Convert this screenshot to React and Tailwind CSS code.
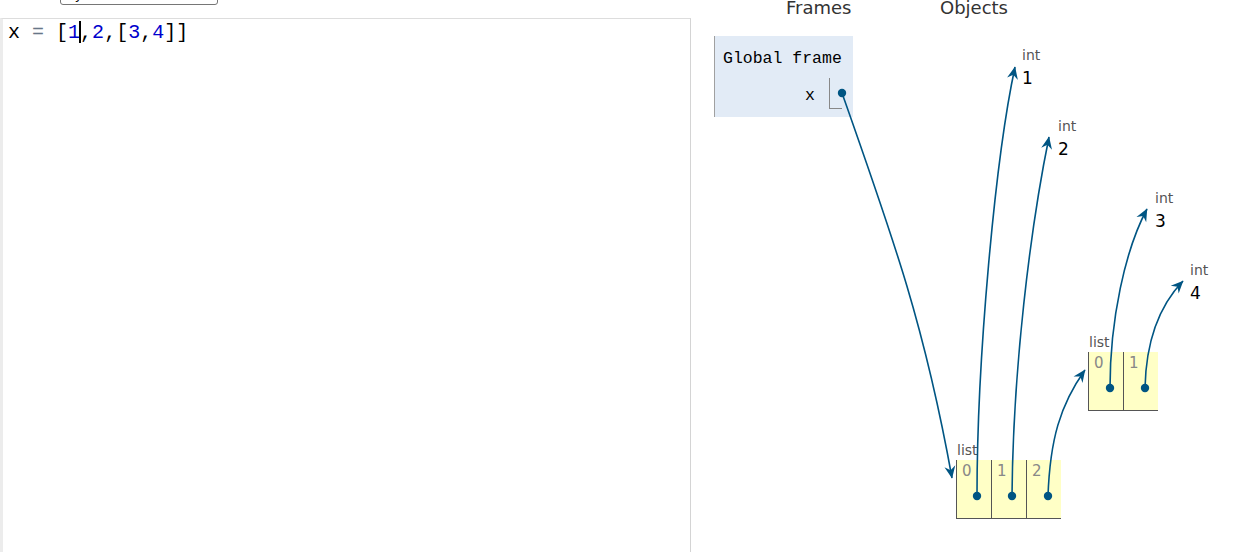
import React from 'react';

const ARROW = '#005583';

// pointer arrows, in page coordinates
const arrows = [
  'M842,93 C895,243 925,328 952,478',
  'M977,496 C977,360 995,160 1015,67',
  'M1012,496 C1013,370 1030,230 1049,137',
  'M1048,496 C1050,440 1060,405 1085,370',
  'M1110,388 C1110,320 1125,250 1147,209',
  'M1145,388 C1146,340 1160,305 1183,281',
];

const dots = [
  [842, 93],
  [977, 496],
  [1012, 496],
  [1048, 496],
  [1110, 388],
  [1145, 388],
];

function IntObj({ pos, value }) {
  return (
    <div className={`absolute ${pos}`}>
      <div className="text-[14px] leading-[16px] text-[#555]">int</div>
      <div className="mt-[5px] text-[17px] leading-[20px] text-black">{value}</div>
    </div>
  );
}

function ListObj({ pos, count }) {
  return (
    <div className={`absolute ${pos}`}>
      <div className="pl-[1px] text-[14px] leading-[16px] text-[#555]">list</div>
      <div className="mt-[2px] flex">
        {Array.from({ length: count }).map((_, i) => (
          <div
            key={i}
            className="h-[59px] w-[35px] border-b border-l border-[#555] bg-[#ffffc6] pl-[5px] pt-[2px] text-[15px] leading-[18px] text-[#888]"
          >
            {i}
          </div>
        ))}
      </div>
    </div>
  );
}

export default function App() {
  return (
    <div className="flex h-[552px] w-[1254px] overflow-hidden bg-white font-['DejaVu_Sans',sans-serif]">
      {/* Code editor */}
      <div className="flex w-[691px] shrink-0 flex-col">
        <div className="h-[18px]">
          <div className="-mt-[19px] ml-[60px] h-[24px] w-[158px] rounded-[3px] border border-[#767676] bg-white pl-[6px] pt-[5px] text-[13px] leading-[16px] text-black">
            Python 3.6
          </div>
        </div>
        <div className="flex-1 border-l-[3px] border-r border-t border-l-[#ececec] border-r-[#d4d4d4] border-t-[#dddddd] pl-[5px] pt-[3px]">
          <div className="font-['Liberation_Mono',monospace] text-[20px] leading-[22px] whitespace-pre">
            <span className="text-black">x</span>
            <span> </span>
            <span className="text-[#687687]">=</span>
            <span> </span>
            <span className="text-black">[</span>
            <span className="text-[#0000cd]">1</span>
            <span className="relative">
              <span className="absolute left-[-1px] top-0 h-[22px] w-[2px] bg-black" />
            </span>
            <span className="text-black">,</span>
            <span className="text-[#0000cd]">2</span>
            <span className="text-black">,[</span>
            <span className="text-[#0000cd]">3</span>
            <span className="text-black">,</span>
            <span className="text-[#0000cd]">4</span>
            <span className="text-black">]]</span>
          </div>
        </div>
      </div>

      {/* Visualization */}
      <div className="relative flex-1">
        <div className="absolute left-[95px] top-[-3px] text-[18px] leading-[21px] text-[#333]">Frames</div>
        <div className="absolute left-[249px] top-[-3px] text-[18px] leading-[21px] text-[#333]">Objects</div>

        {/* Global frame */}
        <div className="absolute left-[23px] top-[36px] h-[81px] w-[139px] border-l border-[#a0a0a0] bg-[#e2ebf6] pl-[8px] pt-[13px] font-['Liberation_Mono',monospace] text-[16.5px] leading-[19px] text-black">
          <div>Global frame</div>
          <div className="mt-[10px] flex justify-end pr-[11px]">
            <span className="mr-[14px] mt-[8px]">x</span>
            <div className="h-[31px] w-[13px] border-b border-l border-[#888]" />
          </div>
        </div>

        <IntObj pos="left-[331px] top-[47px]" value="1" />
        <IntObj pos="left-[367px] top-[118px]" value="2" />
        <IntObj pos="left-[464px] top-[190px]" value="3" />
        <IntObj pos="left-[499px] top-[262px]" value="4" />

        <ListObj pos="left-[397px] top-[334px]" count={2} />
        <ListObj pos="left-[265px] top-[442px]" count={3} />

        <svg
          className="pointer-events-none absolute left-0 top-0"
          width="563"
          height="552"
          viewBox="691 0 563 552"
        >
          <defs>
            <marker
              id="head"
              markerUnits="userSpaceOnUse"
              viewBox="-13 -7 14 14"
              refX="0"
              refY="0"
              markerWidth="14"
              markerHeight="14"
              orient="auto"
            >
              <path d="M0.5,0 L-12,-5.5 L-8,0 L-12,5.5 Z" fill={ARROW} />
            </marker>
          </defs>
          {arrows.map((d, i) => (
            <path key={i} d={d} fill="none" stroke={ARROW} strokeWidth="1.6" markerEnd="url(#head)" />
          ))}
          {dots.map(([cx, cy], i) => (
            <circle key={i} cx={cx} cy={cy} r="4.2" fill={ARROW} />
          ))}
        </svg>
      </div>
    </div>
  );
}
